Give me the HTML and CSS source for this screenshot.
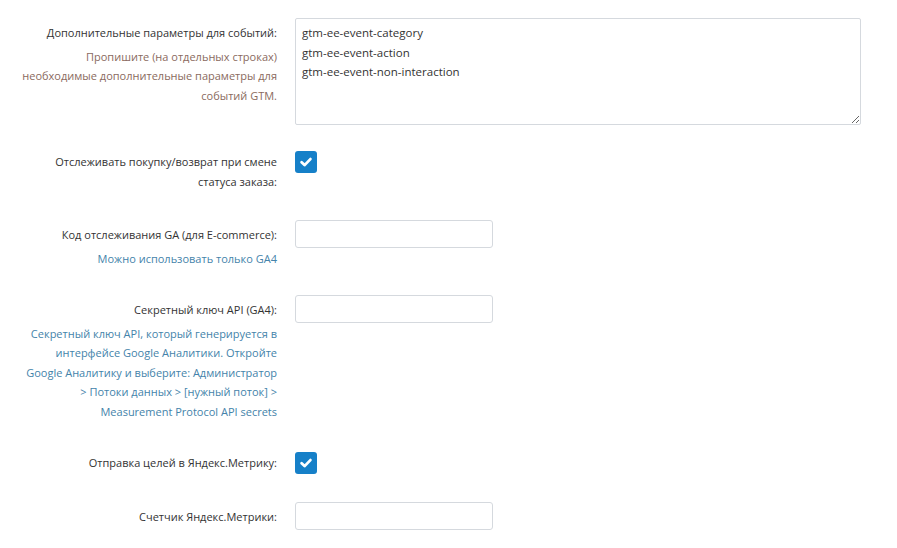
FILE: index.html
```html
<!DOCTYPE html>
<html lang="ru">
<head>
<meta charset="utf-8">
<title>Настройки</title>
<link rel="stylesheet" href="styles.css">
</head>
<body>
<form class="settings">
  <div class="row row-1">
    <div class="label">
      <div class="title">Дополнительные параметры для событий:</div>
      <div class="help help-warm">Пропишите (на отдельных строках) необходимые дополнительные параметры для событий GTM.</div>
    </div>
    <div class="control">
      <textarea class="textarea">gtm-ee-event-category
gtm-ee-event-action
gtm-ee-event-non-interaction</textarea>
    </div>
  </div>

  <div class="row row-2">
    <div class="label label-check">
      <div class="title">Отслеживать покупку/возврат при смене статуса заказа:</div>
    </div>
    <div class="control">
      <span class="checkbox"><svg viewBox="0 0 22 22" width="22" height="22"><path d="M6.6 11.2 L9.6 14.1 L15.4 8.1" fill="none" stroke="#fff" stroke-width="2.8" stroke-linecap="round" stroke-linejoin="round"/></svg></span>
    </div>
  </div>

  <div class="row row-3">
    <div class="label">
      <div class="title">Код отслеживания GA (для E-commerce):</div>
      <div class="help help-blue">Можно использовать только GA4</div>
    </div>
    <div class="control">
      <input class="input" type="text">
    </div>
  </div>

  <div class="row row-4">
    <div class="label">
      <div class="title">Секретный ключ API (GA4):</div>
      <div class="help help-blue">Секретный ключ API, который генерируется в интерфейсе Google Аналитики. Откройте Google Аналитику и выберите: Администратор &gt; Потоки данных &gt; [нужный поток] &gt; Measurement Protocol API secrets</div>
    </div>
    <div class="control">
      <input class="input" type="text">
    </div>
  </div>

  <div class="row row-5">
    <div class="label label-check">
      <div class="title">Отправка целей в Яндекс.Метрику:</div>
    </div>
    <div class="control">
      <span class="checkbox"><svg viewBox="0 0 22 22" width="22" height="22"><path d="M6.6 11.2 L9.6 14.1 L15.4 8.1" fill="none" stroke="#fff" stroke-width="2.8" stroke-linecap="round" stroke-linejoin="round"/></svg></span>
    </div>
  </div>

  <div class="row row-6">
    <div class="label">
      <div class="title">Счетчик Яндекс.Метрики:</div>
    </div>
    <div class="control">
      <input class="input" type="text">
    </div>
  </div>
</form>
</body>
</html>
```

FILE: styles.css
```css
html, body {
  margin: 0;
  padding: 0;
  background: #fff;
}

body {
  font-family: "Open Sans", "Noto Sans", sans-serif;
  font-size: 11px;
  line-height: 19.5px;
  color: #333;
}

.settings {
  padding-top: 18px;
}

.row {
  display: grid;
  grid-template-columns: 277px 566px;
  column-gap: 18px;
}

.row-1 { margin-bottom: 26px; }
.row-2 { margin-bottom: 29px; }
.row-3 { margin-bottom: 27px; }
.row-4 { margin-bottom: 31px; }
.row-5 { margin-bottom: 28px; }

.label {
  box-sizing: border-box;
  text-align: right;
  padding: 5px 0 0 22px;
}

.label-check {
  padding-top: 1px;
}

.title {
  color: #333;
}

.help {
  margin-top: 4px;
}

.help-warm {
  color: #8a6a5e;
}

.help-blue {
  color: #4483aa;
}

.control {
  display: flex;
  align-items: flex-start;
}

.textarea {
  box-sizing: border-box;
  width: 566px;
  height: 107px;
  margin: 0;
  padding: 4px 6px;
  border: 1px solid #d5d9de;
  border-radius: 2px;
  font-family: inherit;
  font-size: 11.5px;
  line-height: 19.5px;
  color: #333;
  resize: vertical;
}

.input {
  box-sizing: border-box;
  width: 198px;
  height: 28px;
  margin: 0;
  padding: 4px 8px;
  border: 1px solid #d5d9de;
  border-radius: 3px;
  font: inherit;
}

.checkbox {
  display: block;
  width: 22px;
  height: 22px;
  border-radius: 3px;
  background: #1680c8;
}

.checkbox svg {
  display: block;
}
```
